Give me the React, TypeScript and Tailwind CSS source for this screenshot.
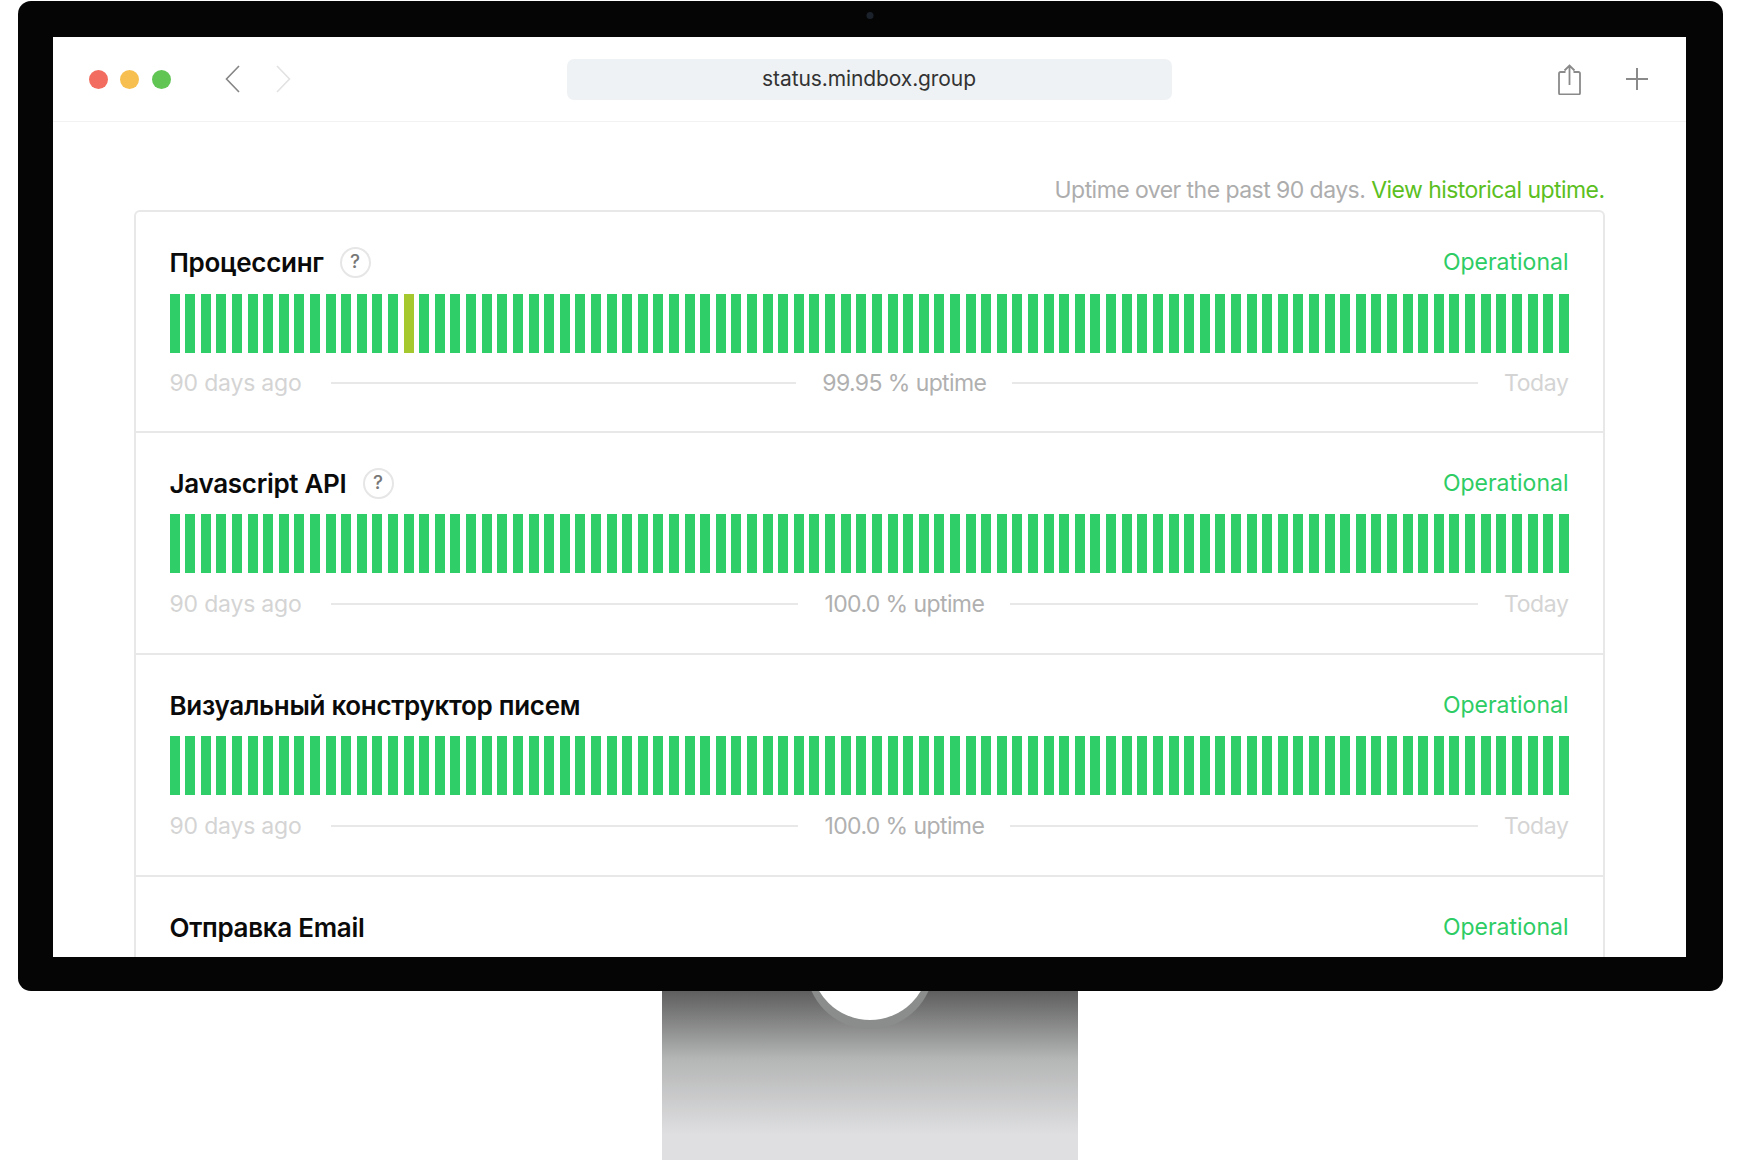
import React from 'react'

const BAR_COUNT = 90

type Service = {
  name: string
  uptime: string
  hasHelp?: boolean
  warnIndex?: number
  headerOnly?: boolean
}

const services: Service[] = [
  { name: 'Процессинг', uptime: '99.95 % uptime', hasHelp: true, warnIndex: 15 },
  { name: 'Javascript API', uptime: '100.0 % uptime', hasHelp: true },
  { name: 'Визуальный конструктор писем', uptime: '100.0 % uptime' },
  // only the title of this one shows above the bezel
  { name: 'Отправка Email', uptime: '100.0 % uptime', headerOnly: true },
]

const UptimeBars: React.FC<{ warnIndex?: number; first: boolean }> = ({ warnIndex, first }) => (
  <div className={first ? 'mr-[-1px] mt-[16px] flex h-[59px] justify-between' : 'mr-[-1px] mt-[15px] flex h-[59px] justify-between'}>
    {Array.from({ length: BAR_COUNT }, (_, i) => (
      <div key={i} className={i === warnIndex ? 'w-[10px] bg-[#a5c82f]' : 'w-[10px] bg-[#30ce68]'} />
    ))}
  </div>
)

const ServiceRow: React.FC<{ service: Service; first: boolean }> = ({ service, first }) => (
  <div className={first ? 'h-[219px] shrink-0 px-[34px] pt-[34px]' : 'h-[222px] shrink-0 border-t-2 border-[#e8e8e8] px-[34px] pt-[34px]'}>
    <div className="flex h-[32px] items-center justify-between">
      <div className="flex items-center gap-[16px]">
        <span className="text-[26px] font-semibold tracking-[-0.3px] text-[#0a0a0a]">{service.name}</span>
        {service.hasHelp && (
          <span className="flex h-[31px] w-[31px] items-center justify-center rounded-full border-2 border-[#e6e6e6] text-[19px] font-medium text-[#777]">
            ?
          </span>
        )}
      </div>
      <span className="text-[23px] text-[#2ecc64]">Operational</span>
    </div>
    {!service.headerOnly && (
      <>
        <UptimeBars warnIndex={service.warnIndex} first={first} />
        <div className={first ? 'mt-[16px] flex h-[28px] items-center gap-[26px] text-[23px]' : 'mt-[17px] flex h-[28px] items-center gap-[26px] text-[23px]'}>
          <span className="mr-[3px] tracking-[-0.2px] text-[#d4d4d4]">90 days ago</span>
          <div className="h-[2px] flex-1 bg-[#e8e8e8]" />
          <span className="tracking-[-0.6px] text-[#b0b0b0]">{service.uptime}</span>
          <div className="h-[2px] flex-1 bg-[#e8e8e8]" />
          <span className="tracking-[-0.4px] text-[#d4d4d4]">Today</span>
        </div>
      </>
    )}
  </div>
)

const Toolbar: React.FC = () => (
  <div className="grid h-[85px] shrink-0 grid-cols-[1fr_605px_1fr] items-center border-b border-[#f2f2f2]">
    <div className="flex items-center pl-[36px]">
      <div className="flex gap-[12.6px]">
        <div className="h-[19px] w-[19px] rounded-full bg-[#f26d5f]" />
        <div className="h-[19px] w-[19px] rounded-full bg-[#f6bf4f]" />
        <div className="h-[19px] w-[19px] rounded-full bg-[#61c554]" />
      </div>
      <div className="ml-[54px] flex gap-[36px]">
        <svg width="15" height="28" viewBox="0 0 15 28" fill="none" stroke="#858585" strokeWidth="1.6">
          <path d="M14 1 1.5 14 14 27" />
        </svg>
        <svg width="15" height="28" viewBox="0 0 15 28" fill="none" stroke="#e2e2e2" strokeWidth="1.6">
          <path d="M1 1l12.5 13L1 27" />
        </svg>
      </div>
    </div>
    <div className="flex h-[41px] items-center justify-center rounded-[7px] bg-[#eff2f4] text-[21px] tracking-[-0.1px] text-[#333]">
      status.mindbox.group
    </div>
    <div className="flex items-center justify-end gap-[45px] pr-[38px]">
      <svg width="23" height="31" viewBox="0 0 23 31" fill="none" stroke="#8a8a8a" strokeWidth="1.8">
        <path d="M7.5 8H2.5A1.5 1.5 0 0 0 1 9.5V29A1.5 1.5 0 0 0 2.5 30.5h18A1.5 1.5 0 0 0 22 29V9.5A1.5 1.5 0 0 0 20.5 8H15.5" />
        <path d="M11.5 21V1.5M6.5 6.5l5-5 5 5" />
      </svg>
      <svg width="22" height="22" viewBox="0 0 22 22" fill="none" stroke="#8a8a8a" strokeWidth="2">
        <path d="M11 0v22M0 11h22" />
      </svg>
    </div>
  </div>
)

const App: React.FC = () => {
  return (
    <div className="flex h-[1160px] w-[1740px] flex-col items-center overflow-hidden bg-white pt-px font-['Inter','Noto_Sans',sans-serif]">
      {/* Monitor */}
      <div className="relative z-10 h-[990px] w-[1705px] shrink-0 rounded-[13px] bg-[#050505] pb-[34px] pl-[35px] pr-[37px] pt-[36px]">
        <div className="absolute left-1/2 top-[11px] h-[7px] w-[7px] -translate-x-1/2 rounded-full bg-[#1c222b]" />
        <div className="flex h-full flex-col overflow-hidden bg-white">
          <Toolbar />
          <div className="px-[81px] pt-[54px]">
            <div className="mb-[6px] h-[28px] text-right text-[23px] leading-[28px] tracking-[-0.55px] text-[#adadad]">
              Uptime over the past 90 days. <span className="text-[#5bbf1f]">View historical uptime.</span>
            </div>
            <div className="flex flex-col rounded-t-[6px] border-2 border-b-0 border-[#e8e8e8]">
              {services.map((service, i) => (
                <ServiceRow key={service.name} service={service} first={i === 0} />
              ))}
            </div>
          </div>
        </div>
      </div>

      {/* Stand */}
      <div className="relative w-[416px] flex-1 overflow-hidden bg-gradient-to-b from-[#5f5f5f] via-[#b4b5b5] via-40% to-[#dfdfe1] to-85%">
        <div className="absolute left-1/2 top-[-90px] h-[128px] w-[128px] -translate-x-1/2 rounded-full bg-[#8b8c8c]" />
        <div className="absolute left-1/2 top-[-89px] h-[118px] w-[118px] -translate-x-1/2 rounded-full bg-white" />
      </div>
    </div>
  )
}

export default App
